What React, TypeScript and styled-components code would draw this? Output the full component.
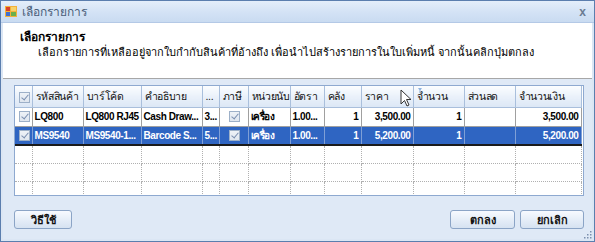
import React from 'react'
import styled, { createGlobalStyle } from 'styled-components'

const GlobalStyle = createGlobalStyle`
  html, body {
    margin: 0;
    padding: 0;
    background: #ffffff;
  }
  * {
    box-sizing: border-box;
  }
`

const FONT = `Tahoma, "Liberation Sans", Arial, sans-serif`

const Window = styled.div`
  position: relative;
  width: 595px;
  height: 242px;
  display: flex;
  flex-direction: column;
  border: 1px solid #5b7eae;
  background: #dbe6f4;
  font-family: ${FONT};
  font-size: 11px;
  color: #000;
  overflow: hidden;
`

const TitleBar = styled.div`
  height: 22px;
  flex: none;
  display: flex;
  align-items: center;
  padding: 0 6px 0 4px;
  gap: 5px;
  background: linear-gradient(#e4eefa, #d3e2f5 55%, #c9dbf1);
  border-bottom: 1px solid #b4c9e6;
`

const TitleText = styled.span`
  flex: 1;
  font-size: 12px;
  color: #4a5d78;
`

const CloseGlyph = styled.span`
  font-size: 12px;
  color: #6a7b92;
  font-weight: bold;
  margin-right: 2px;
`

const Frame = styled.div`
  flex: 1;
  display: flex;
  flex-direction: column;
  padding: 0 2px 2px 2px;
`

const HeaderPanel = styled.div`
  height: 56px;
  flex: none;
  background: #ffffff;
  border-bottom: 1px solid #a7a7a7;
  padding: 6px 0 0 17px;
`

const HeaderTitle = styled.div`
  font-size: 12px;
  font-weight: bold;
  line-height: 16px;
`

const HeaderSub = styled.div`
  font-size: 11px;
  line-height: 14px;
  padding-left: 18px;
`

const Body = styled.div`
  flex: 1;
  display: flex;
  flex-direction: column;
  padding: 6px 8px 0 11px;
  background: #dfe9f6;
`

const GridBox = styled.div`
  position: relative;
  height: 111px;
  flex: none;
  border: 1px solid #8ea9d0;
  background: #ffffff;
  overflow: hidden;
`

const Table = styled.table`
  border-collapse: collapse;
  table-layout: fixed;
  width: 566px;
`

const HeadCell = styled.th<{ $center?: boolean }>`
  height: 21px;
  padding: 0 1px 0 3px;
  text-align: ${p => (p.$center ? 'center' : 'left')};
  font-weight: normal;
  font-size: 10.5px;
  letter-spacing: -0.3px;
  white-space: nowrap;
  overflow: hidden;
  background: linear-gradient(#fbfdff, #eaf1fa 50%, #dce7f5);
  border-right: 1px solid #a9bfdc;
  border-bottom: 1px solid #a9bfdc;
  color: #111;
`

const Row = styled.tr<{ $selected?: boolean }>`
  height: 19px;
  background: ${p => (p.$selected ? '#2f65c2' : '#ffffff')};
  color: ${p => (p.$selected ? '#ffffff' : '#000000')};
  border-bottom: ${p => (p.$selected ? '2px solid #1a1a1a' : '1px solid #a0a0a0')};
`

const Cell = styled.td<{ $align?: 'left' | 'right' | 'center'; $selected?: boolean }>`
  padding: ${p => (p.$align === 'right' ? '0 2px 0 1px' : '0 0 0 2px')};
  text-align: ${p => p.$align ?? 'left'};
  font-weight: bold;
  font-size: 10px;
  letter-spacing: -0.4px;
  white-space: nowrap;
  overflow: hidden;
  text-overflow: clip;
  border-right: 1px solid ${p => (p.$selected ? '#7f9fd6' : '#a0a0a0')};
`

const EmptyRow = styled.tr`
  height: 18px;
`

const EmptyCell = styled.td`
  border-right: 1px dotted #b0b0b0;
  border-bottom: 1px dotted #b0b0b0;
`

const Check = styled.span`
  display: inline-block;
  vertical-align: middle;
  width: 11px;
  height: 11px;
  border: 1px solid #9db0c8;
  background: linear-gradient(#eef2f7, #dfe6ef);
  position: relative;
  &::after {
    content: '';
    position: absolute;
    left: 3px;
    top: 0px;
    width: 3px;
    height: 6px;
    border: solid #7a8fb0;
    border-width: 0 1.5px 1.5px 0;
    transform: rotate(40deg);
  }
`

const Footer = styled.div`
  display: flex;
  align-items: center;
  justify-content: space-between;
  margin-top: 14px;
`

const ButtonGroup = styled.div`
  display: flex;
  gap: 5px;
`

const Button = styled.button<{ $w: number }>`
  width: ${p => p.$w}px;
  height: 19px;
  padding: 0;
  font-family: ${FONT};
  font-size: 11px;
  font-weight: bold;
  color: #111;
  border: 1px solid #8ba4c6;
  border-radius: 3px;
  background: linear-gradient(#f7faff, #e6eef8 50%, #d6e2f1);
`

const Cursor = styled.svg`
  position: absolute;
  left: 385px;
  top: 1px;
`

const Grip = styled.svg`
  position: absolute;
  right: 2px;
  bottom: 2px;
`

const columns = [
  { w: 17, label: '', center: true },
  { w: 51, label: 'รหัสสินค้า' },
  { w: 58, label: 'บาร์โค้ด' },
  { w: 61, label: 'คำอธิบาย' },
  { w: 17, label: '...' },
  { w: 29, label: 'ภาษี' },
  { w: 42, label: 'หน่วยนับ' },
  { w: 34, label: 'อัตรา' },
  { w: 37, label: 'คลัง' },
  { w: 52, label: 'ราคา' },
  { w: 51, label: 'จำนวน' },
  { w: 51, label: 'ส่วนลด' },
  { w: 66, label: 'จำนวนเงิน' },
]

const rows = [
  { code: 'LQ800', barcode: 'LQ800 RJ45', desc: 'Cash Draw...', extra: '3...', unit: 'เครื่อง', rate: '1.00...', wh: '1', price: '3,500.00', qty: '1', disc: '', amount: '3,500.00' },
  { code: 'MS9540', barcode: 'MS9540-1...', desc: 'Barcode S...', extra: '5...', unit: 'เครื่อง', rate: '1.00...', wh: '1', price: '5,200.00', qty: '1', disc: '', amount: '5,200.00' },
]

export default function App() {
  return (
    <>
      <GlobalStyle />
      <Window>
        <TitleBar>
          <svg width="12" height="11" viewBox="0 0 12 11">
            <rect x="0" y="0" width="12" height="11" fill="#f3b13a" />
            <rect x="1" y="1" width="4" height="4" fill="#d8402a" />
            <rect x="6" y="1" width="5" height="4" fill="#f7d36b" />
            <rect x="1" y="6" width="4" height="4" fill="#3f6fd0" />
            <rect x="6" y="6" width="5" height="4" fill="#6ab04c" />
          </svg>
          <TitleText>เลือกรายการ</TitleText>
          <CloseGlyph>x</CloseGlyph>
        </TitleBar>
        <Frame>
          <HeaderPanel>
            <HeaderTitle>เลือกรายการ</HeaderTitle>
            <HeaderSub>เลือกรายการที่เหลืออยู่จากใบกำกับสินค้าที่อ้างถึง เพื่อนำไปสร้างรายการในใบเพิ่มหนี้ จากนั้นคลิกปุ่มตกลง</HeaderSub>
          </HeaderPanel>
          <Body>
            <GridBox>
              <Table>
                <colgroup>
                  {columns.map((c, i) => (
                    <col key={i} style={{ width: c.w }} />
                  ))}
                </colgroup>
                <thead>
                  <tr>
                    {columns.map((c, i) => (
                      <HeadCell key={i} $center={c.center}>
                        {i === 0 ? <Check /> : c.label}
                      </HeadCell>
                    ))}
                  </tr>
                </thead>
                <tbody>
                  {rows.map((r, i) => {
                    const sel = i === 1
                    return (
                      <Row key={r.code} $selected={sel}>
                        <Cell $align="center" $selected={sel}><Check /></Cell>
                        <Cell $selected={sel}>{r.code}</Cell>
                        <Cell $selected={sel}>{r.barcode}</Cell>
                        <Cell $selected={sel}>{r.desc}</Cell>
                        <Cell $selected={sel}>{r.extra}</Cell>
                        <Cell $align="center" $selected={sel}><Check /></Cell>
                        <Cell $selected={sel}>{r.unit}</Cell>
                        <Cell $selected={sel}>{r.rate}</Cell>
                        <Cell $align="right" $selected={sel}>{r.wh}</Cell>
                        <Cell $align="right" $selected={sel}>{r.price}</Cell>
                        <Cell $align="right" $selected={sel}>{r.qty}</Cell>
                        <Cell $align="right" $selected={sel}>{r.disc}</Cell>
                        <Cell $align="right" $selected={sel}>{r.amount}</Cell>
                      </Row>
                    )
                  })}
                  {[0, 1, 2].map(k => (
                    <EmptyRow key={k}>
                      {columns.map((_, i) => (
                        <EmptyCell key={i} />
                      ))}
                    </EmptyRow>
                  ))}
                </tbody>
              </Table>
              <Cursor width="22" height="20" viewBox="0 0 22 20">
                <path d="M18 1 L22 1 L20 4 Z" fill="#8fb4e0" />
                <rect x="19.4" y="3.5" width="1.2" height="2.5" fill="#8fb4e0" />
                <path d="M1 3 L1 17 L4.5 13.5 L7 19 L9 18 L6.5 12.5 L11 12.5 Z" fill="#ffffff" stroke="#333" strokeWidth="1" />
              </Cursor>
            </GridBox>
            <Footer>
              <Button $w={58}>วิธีใช้</Button>
              <ButtonGroup>
                <Button $w={65}>ตกลง</Button>
                <Button $w={64}>ยกเลิก</Button>
              </ButtonGroup>
            </Footer>
          </Body>
        </Frame>
        <Grip width="10" height="10" viewBox="0 0 10 10">
          {[[8, 2], [8, 5], [8, 8], [5, 5], [5, 8], [2, 8]].map(([x, y], i) => (
            <rect key={i} x={x} y={y} width="1.5" height="1.5" fill="#7b8fad" />
          ))}
        </Grip>
      </Window>
    </>
  )
}
